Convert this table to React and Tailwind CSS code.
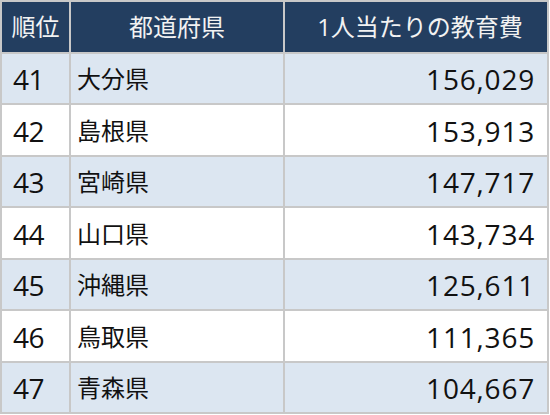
const rows = [
  { rank: 41, pref: "大分県", cost: "156,029" },
  { rank: 42, pref: "島根県", cost: "153,913" },
  { rank: 43, pref: "宮崎県", cost: "147,717" },
  { rank: 44, pref: "山口県", cost: "143,734" },
  { rank: 45, pref: "沖縄県", cost: "125,611" },
  { rank: 46, pref: "鳥取県", cost: "111,365" },
  { rank: 47, pref: "青森県", cost: "104,667" },
];

const font = { fontFamily: '"Open Sans", "Noto Sans CJK JP", sans-serif' };

export default function App() {
  return (
    <div className="w-[550px] h-[415px] bg-white" style={font}>
      <div className="w-[549px] grid grid-cols-[67px_212px_262px] gap-[2px] p-[2px] bg-[#c8c8c8]">
        {/* Header */}
        <div className="h-[49.5px] bg-[#233e60] text-[#f2f2f2] text-[24px] flex items-center justify-center">順位</div>
        <div className="h-[49.5px] bg-[#233e60] text-[#f2f2f2] text-[24px] flex items-center justify-center">都道府県</div>
        <div className="h-[49.5px] bg-[#233e60] text-[#f2f2f2] text-[24px] flex items-center justify-center pl-[8px]">
          1人当たりの教育費
        </div>

        {rows.map((r, i) => {
          const bg = i % 2 === 0 ? "bg-[#dce6f1]" : "bg-white";
          return [
            <div key={r.rank + "a"} className={`h-[49.5px] ${bg} flex items-center pl-[11px] text-[28px] tracking-[-0.5px] text-[#111] pt-[2px]`}>
              {r.rank}
            </div>,
            <div key={r.rank + "b"} className={`h-[49.5px] ${bg} flex items-center pl-[6px] text-[24px] text-[#111] pt-[2px]`}>
              {r.pref}
            </div>,
            <div key={r.rank + "c"} className={`h-[49.5px] ${bg} flex items-center justify-end pr-[12px] text-[28px] tracking-[0.8px] text-[#111] pt-[2px]`}>
              {r.cost}
            </div>,
          ];
        })}
      </div>
    </div>
  );
}
